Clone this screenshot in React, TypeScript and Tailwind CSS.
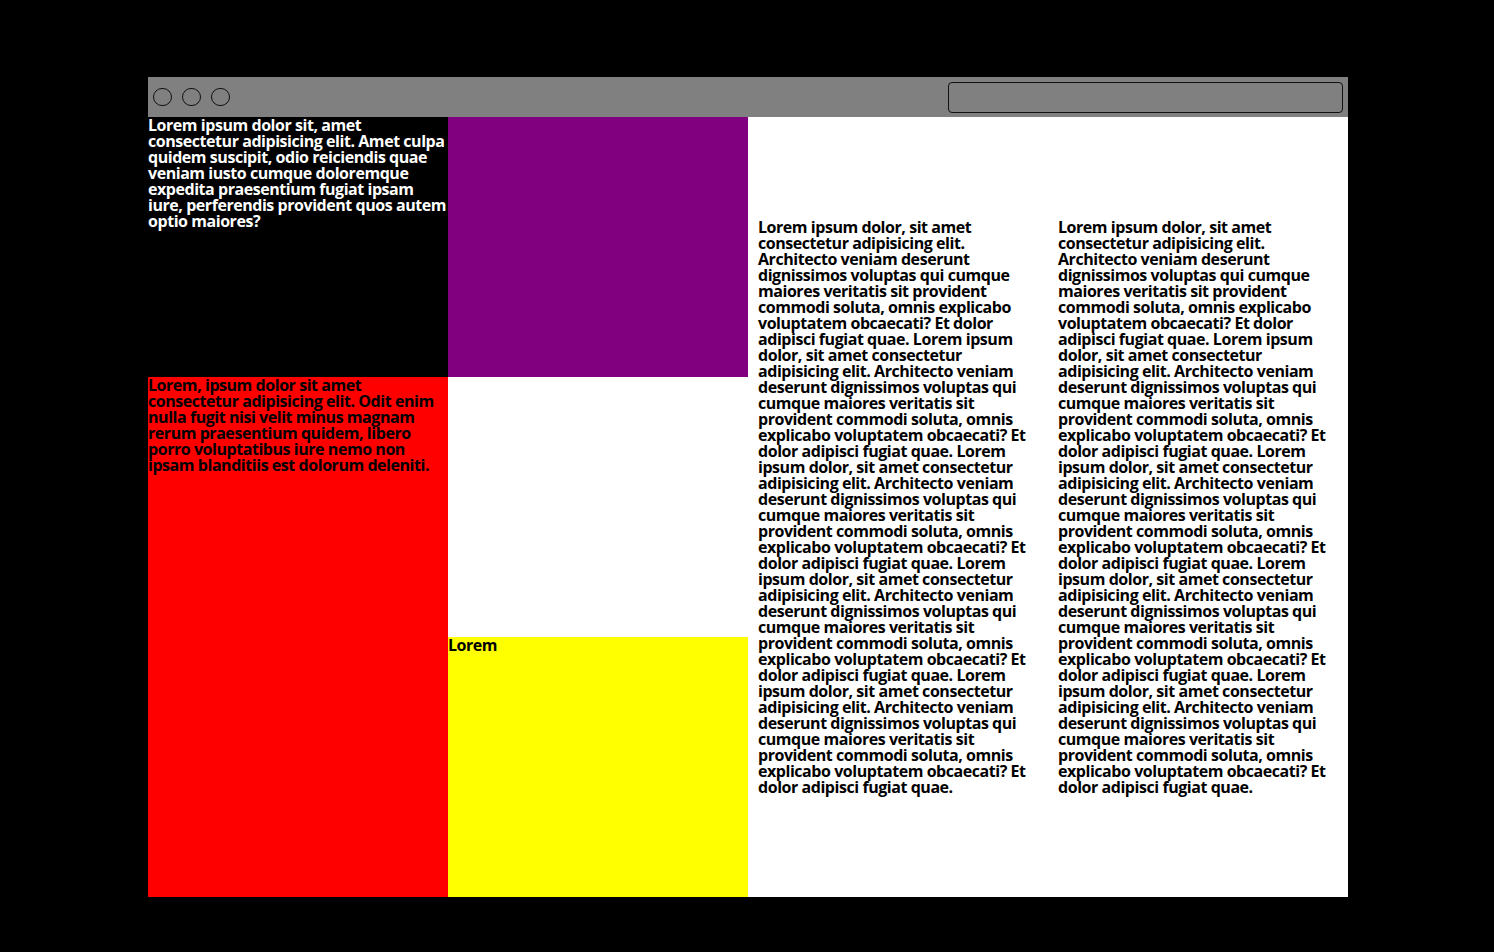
import React from 'react';

const para =
  'Lorem ipsum dolor, sit amet consectetur adipisicing elit. Architecto veniam deserunt dignissimos voluptas qui cumque maiores veritatis sit provident commodi soluta, omnis explicabo voluptatem obcaecati? Et dolor adipisci fugiat quae.';
const longText = [para, para, para, para, para].join(' ');

const App: React.FC = () => {
  return (
    <div className="min-h-screen w-full bg-black pt-[77px] font-['Open_Sans',sans-serif] font-bold text-[16px] leading-[16px] tracking-[-0.45px]">
      <div className="ml-[148px] w-[1200px]">
        {/* title bar */}
        <div className="flex h-[40px] items-center justify-between bg-[#808080] pl-[5px] pr-[5px]">
          <div className="flex gap-[10px]">
            <span className="h-[18px] w-[19px] rounded-full border border-[#111]" />
            <span className="h-[18px] w-[19px] rounded-full border border-[#111]" />
            <span className="h-[18px] w-[19px] rounded-full border border-[#111]" />
          </div>
          <div className="h-[31px] w-[395px] rounded-[4px] border border-[#111]" />
        </div>

        {/* content grid */}
        <div className="grid grid-cols-[300px_300px_300px_300px] grid-rows-[260px_260px_260px]">
          <div className="bg-black text-white">
            Lorem ipsum dolor sit, amet consectetur adipisicing elit. Amet culpa quidem suscipit, odio reiciendis quae veniam iusto cumque doloremque expedita praesentium fugiat ipsam iure, perferendis provident quos autem optio maiores?
          </div>
          <div className="bg-[#800080]" />
          <div className="row-span-3 flex items-center bg-white px-[10px] text-black">
            <p>{longText}</p>
          </div>
          <div className="row-span-3 flex items-center bg-white px-[10px] text-black">
            <p>{longText}</p>
          </div>
          <div className="row-span-2 bg-[#ff0000] text-black">
            Lorem, ipsum dolor sit amet consectetur adipisicing elit. Odit enim nulla fugit nisi velit minus magnam rerum praesentium quidem, libero porro voluptatibus iure nemo non ipsam blanditiis est dolorum deleniti.
          </div>
          <div className="bg-white" />
          <div className="bg-[#ffff00] text-black">Lorem</div>
        </div>
      </div>
    </div>
  );
};

export default App;
